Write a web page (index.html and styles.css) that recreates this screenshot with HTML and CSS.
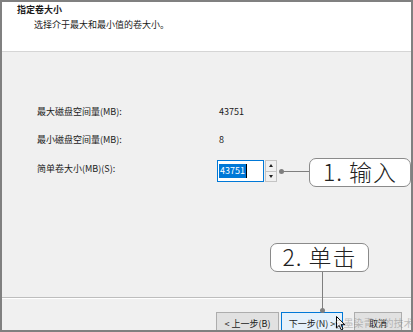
FILE: index.html
```html
<!DOCTYPE html>
<html lang="zh-CN">
<head>
  <meta charset="UTF-8">
  <meta name="viewport" content="width=device-width, initial-scale=1.0">
  <title>新建简单卷向导</title>
  <link rel="stylesheet" href="styles.css">
</head>
<body>
  <div class="window">
    <div class="header">
      <div class="title">指定卷大小</div>
      <div class="subtitle">选择介于最大和最小值的卷大小。</div>
    </div>

    <div class="content">
      <div class="fields">
        <div class="label">最大磁盘空间量(MB):</div>
        <div class="value">43751</div>
        <div class="label">最小磁盘空间量(MB):</div>
        <div class="value">8</div>
        <div class="label label-input">简单卷大小(MB)(S):</div>
        <div class="spin-box">
          <div class="spin-input"><span class="selected">43751</span><span class="caret"></span></div>
          <div class="spin-buttons">
            <div class="spin-btn"><span class="tri-up"></span></div>
            <div class="spin-btn"><span class="tri-down"></span></div>
          </div>
        </div>
      </div>
    </div>

    <div class="footer">
      <button class="btn btn-back">&lt; 上一步(B)</button>
      <button class="btn btn-next">下一步(N) &gt;</button>
      <button class="btn btn-cancel">取消</button>
    </div>

    <!-- annotations -->
    <div class="dot dot-one"></div>
    <div class="line line-one"></div>
    <div class="callout callout-one">1. 输入</div>

    <div class="callout callout-two">2. 单击</div>
    <div class="line line-two"></div>
    <div class="dot dot-two"></div>

    <svg class="cursor" width="10" height="15" viewBox="0 0 10 15">
      <path d="M0.5 0.5 L0.5 12 L3.2 9.4 L5.2 13.8 L7 13 L5 8.7 L8.8 8.7 Z" fill="#fff" stroke="#000" stroke-width="1"/>
    </svg>
    <div class="watermark">@墨染青竹的技术栈</div>
  </div>
</body>
</html>
```

FILE: styles.css
```css
body {
  margin: 0;
  background: #fff;
  font-family: "Noto Sans CJK SC", "Liberation Sans", sans-serif;
  color: #1a1a1a;
}

.window {
  position: relative;
  width: 413px;
  height: 332px;
  box-sizing: border-box;
  border: 2px solid #808080;
  background: #f0f0f0;
  display: flex;
  flex-direction: column;
  overflow: hidden;
  font-size: 9px;
}

.header {
  height: 50px;
  box-sizing: border-box;
  background: #fff;
  border-bottom: 1px solid #d5d5d5;
  padding: 2px 0 0 15px;
}

.title {
  font-weight: bold;
  line-height: 12px;
}

.subtitle {
  margin-top: 3px;
  padding-left: 17px;
  line-height: 12px;
}

.content {
  flex: 1;
  padding: 53px 0 0 35px;
}

.fields {
  display: grid;
  grid-template-columns: 180px auto;
  grid-template-rows: 14px 14px 22px;
  row-gap: 14px;
  line-height: 14px;
}

.value {
  padding-left: 2px;
}

.label-input {
  padding-top: 1px;
}

.spin-box {
  display: flex;
  margin-top: -1px;
}

.spin-input {
  width: 47px;
  height: 22px;
  box-sizing: border-box;
  border: 1px solid #0078d7;
  background: #fff;
  padding: 3px 0 0 1px;
  display: flex;
  align-items: flex-start;
}

.selected {
  background: #0078d7;
  color: #fff;
  line-height: 14px;
  padding: 0 1px;
}

.caret {
  width: 1px;
  height: 14px;
  background: #000;
}

.spin-buttons {
  display: flex;
  flex-direction: column;
  width: 12px;
  height: 22px;
  margin-left: 1px;
}

.spin-btn {
  flex: 1;
  border: 1px solid #c4c4c4;
  background: #f0f0f0;
  display: flex;
  align-items: center;
  justify-content: center;
}

.spin-btn + .spin-btn {
  border-top: none;
}

.tri-up {
  border-left: 2.5px solid transparent;
  border-right: 2.5px solid transparent;
  border-bottom: 3px solid #222;
}

.tri-down {
  border-left: 2.5px solid transparent;
  border-right: 2.5px solid transparent;
  border-top: 3px solid #222;
}

.footer {
  height: 33px;
  box-sizing: border-box;
  border-top: 1px solid #bdbdbd;
  box-shadow: inset 0 1px #fff;
  padding: 14px 0 0 214px;
  display: flex;
  align-items: flex-start;
}

.btn {
  height: 23px;
  padding: 0;
  border: 1px solid #adadad;
  background: #e1e1e1;
  font-family: inherit;
  font-size: 9px;
  color: #1a1a1a;
  line-height: 17px;
  text-align: center;
}

.btn-back {
  width: 63px;
}

.btn-next {
  width: 62px;
  margin-left: 2px;
  border-color: #0078d7;
  background: #e5f1fb;
}

.btn-cancel {
  width: 48px;
  margin-left: 11px;
}

/* annotations */
.callout {
  position: absolute;
  box-sizing: border-box;
  height: 29px;
  border: 1.5px solid #8a8a8a;
  border-radius: 7px;
  background: #fff;
  font-size: 23px;
  font-weight: 300;
  line-height: 25px;
  color: #222;
  text-align: center;
  letter-spacing: 1px;
}

.callout-one {
  left: 307px;
  top: 156px;
  width: 102px;
}

.callout-two {
  left: 268px;
  top: 241px;
  width: 99px;
}

.line {
  position: absolute;
  background: #7f7f7f;
}

.line-one {
  left: 280px;
  top: 169px;
  width: 28px;
  height: 1px;
}

.line-two {
  left: 320px;
  top: 270px;
  width: 1px;
  height: 38px;
}

.dot {
  position: absolute;
  width: 5px;
  height: 5px;
  border-radius: 50%;
  background: #7f7f7f;
}

.dot-one {
  left: 277px;
  top: 167px;
}

.dot-two {
  left: 318px;
  top: 306px;
}

.cursor {
  position: absolute;
  left: 334px;
  top: 314px;
}

.watermark {
  position: absolute;
  left: 332px;
  top: 315px;
  font-size: 10px;
  line-height: 12px;
  color: rgba(120, 120, 120, 0.45);
  white-space: nowrap;
}
```
